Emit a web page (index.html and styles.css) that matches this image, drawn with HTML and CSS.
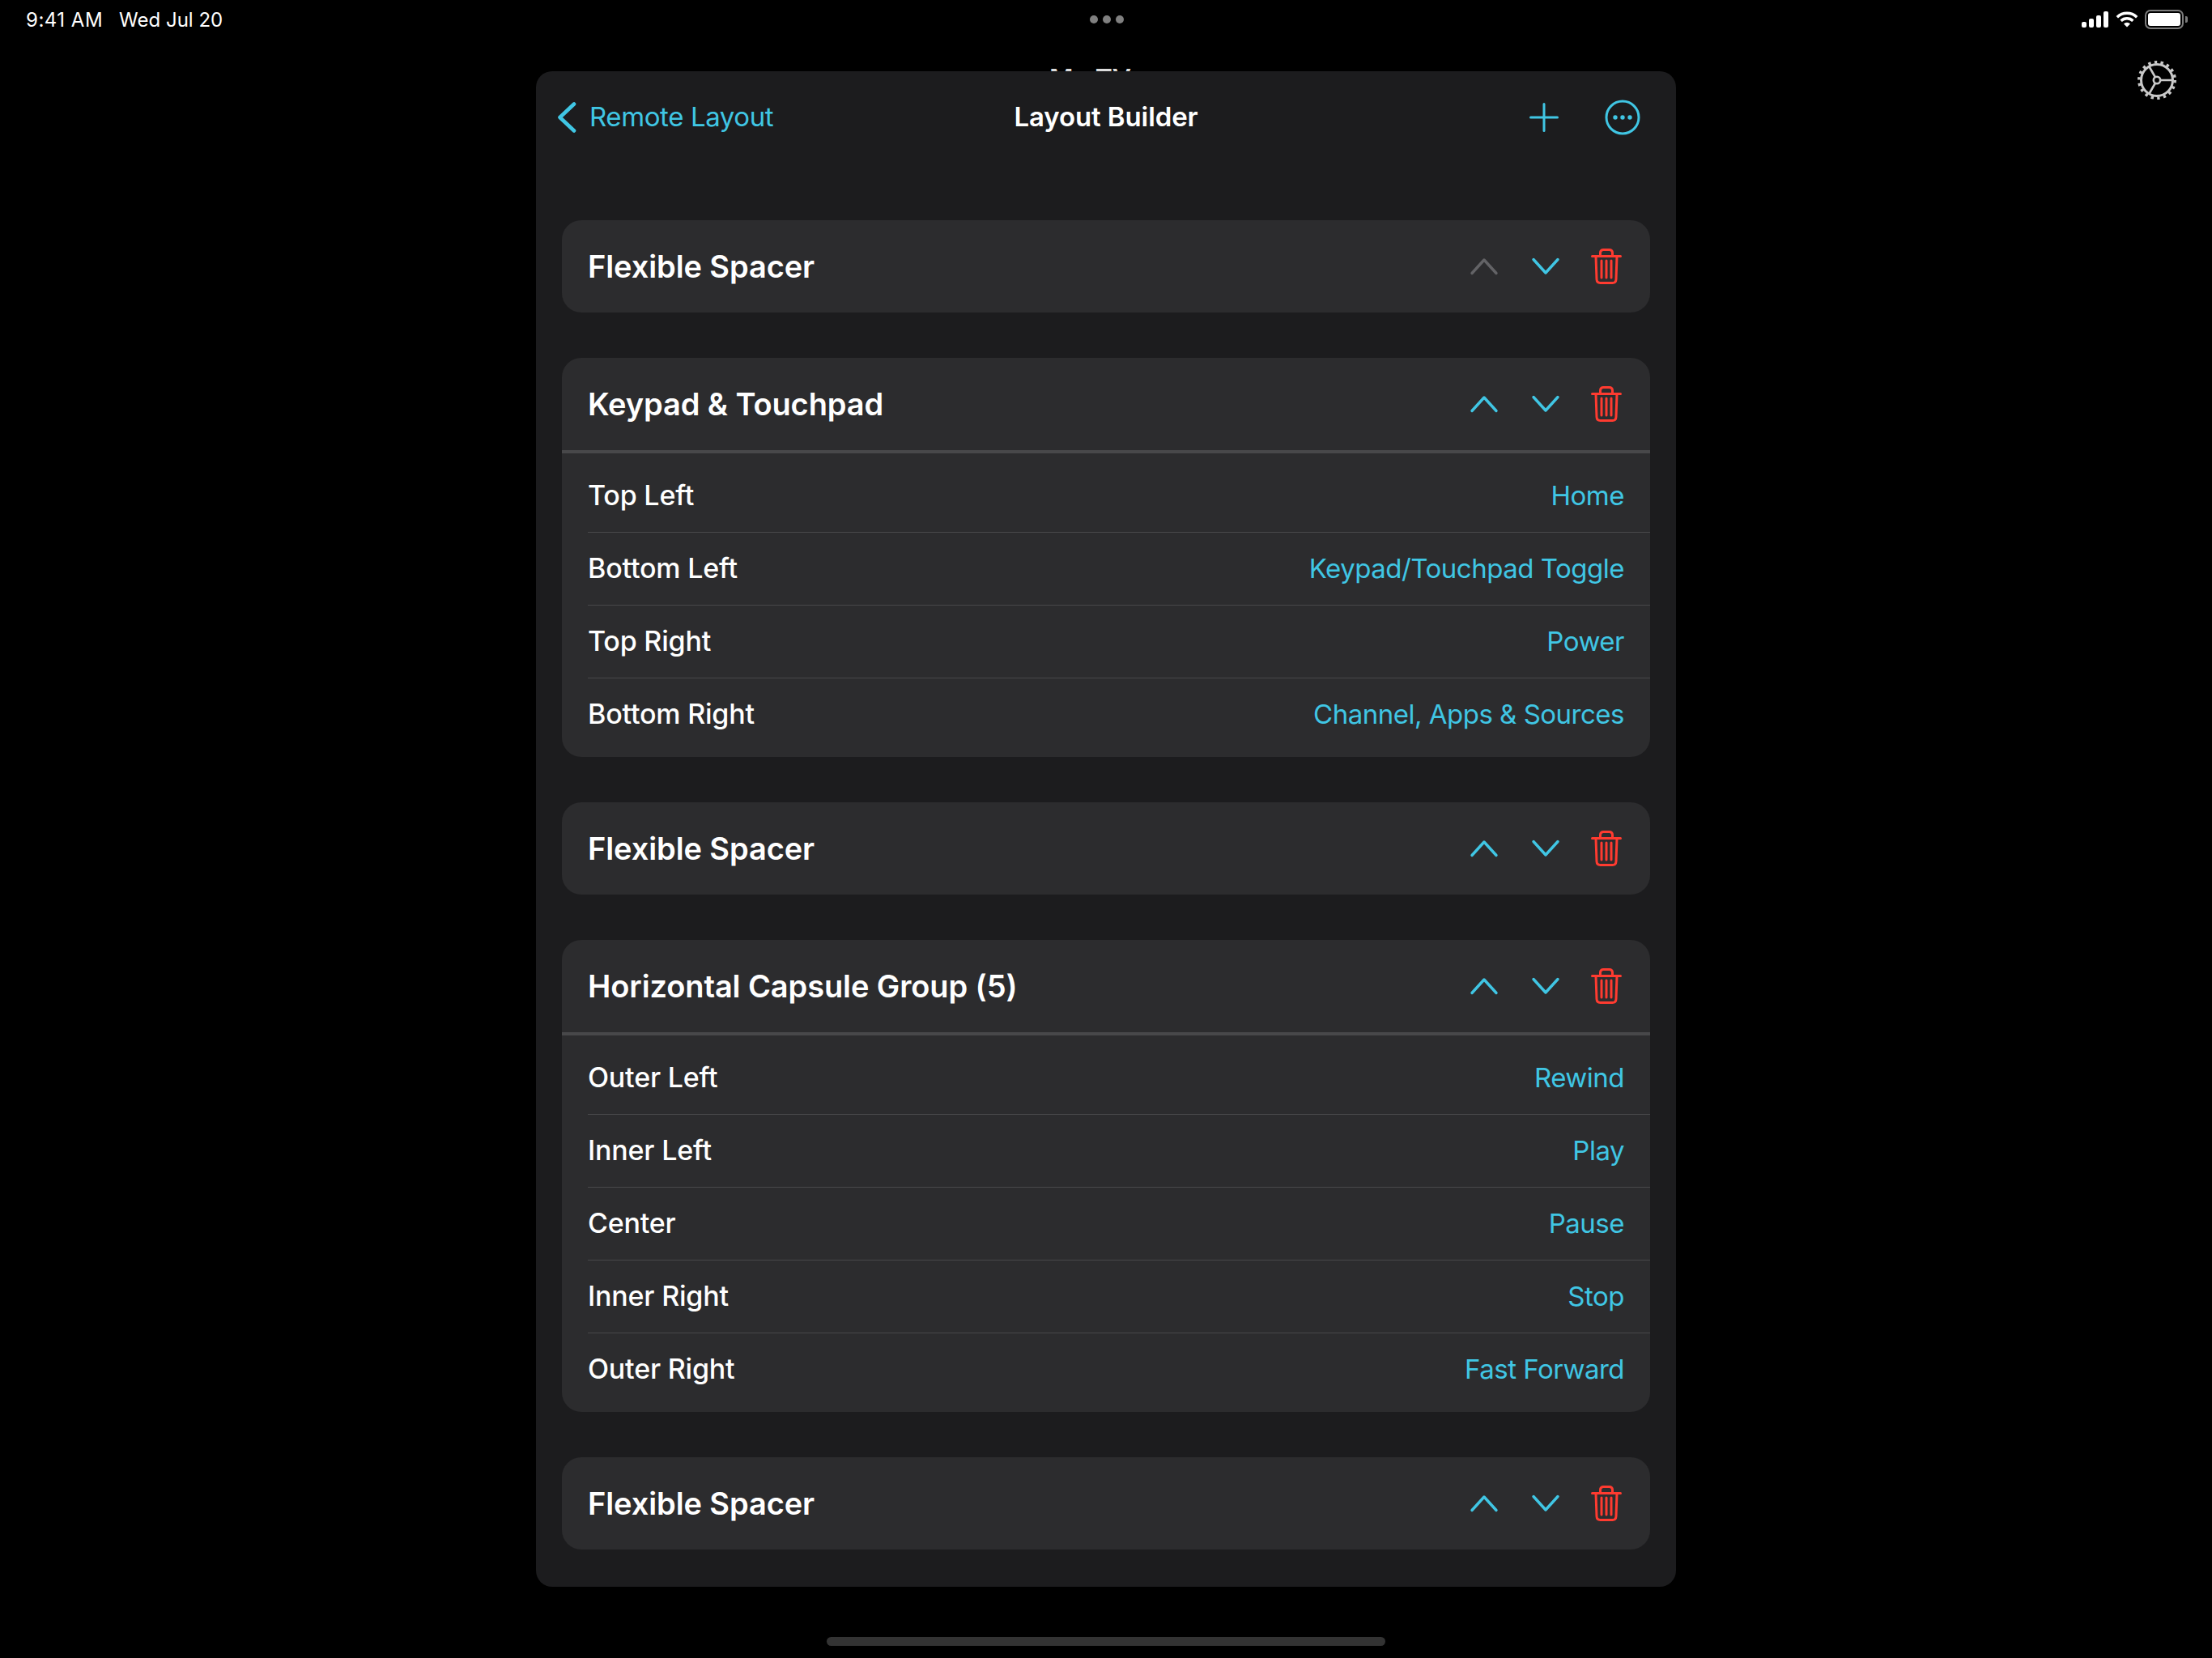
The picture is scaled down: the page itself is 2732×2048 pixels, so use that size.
FILE: index.html
```html
<!DOCTYPE html>
<html lang="en">
<head>
  <meta charset="UTF-8">
  <title>Layout Builder</title>
  <link rel="stylesheet" href="styles.css">
</head>
<body>
  <svg class="defs" width="0" height="0">
    <symbol id="chev-up" viewBox="0 0 36 22"><path d="M3 19.5 L18 3 L33 19.5" fill="none" stroke="currentColor" stroke-width="3.4" stroke-linecap="round" stroke-linejoin="round"/></symbol>
    <symbol id="chev-down" viewBox="0 0 36 22"><path d="M3 2.5 L18 19 L33 2.5" fill="none" stroke="currentColor" stroke-width="3.4" stroke-linecap="round" stroke-linejoin="round"/></symbol>
    <symbol id="trash" viewBox="0 0 38 44">
      <g fill="none" stroke="currentColor" stroke-width="3" stroke-linecap="round" stroke-linejoin="round">
        <path d="M1.5 9.5 H36.5"/>
        <path d="M11.5 9.5 V5.5 Q11.5 1.5 15.5 1.5 H22.5 Q26.5 1.5 26.5 5.5 V9.5"/>
        <path d="M6 9.5 L7 38 Q7.2 42.5 11.5 42.5 H26.5 Q30.8 42.5 31 38 L32 9.5"/>
        <path d="M13 15 V36 M19 15 V36 M25 15 V36"/>
      </g>
    </symbol>
  </svg>

  <header class="status-bar">
    <div class="status-left"><span class="status-time">9:41 AM</span><span>Wed Jul 20</span></div>
    <div class="status-dots"><i></i><i></i><i></i></div>
    <div class="status-right">
      <svg class="signal" width="34" height="20" viewBox="0 0 34 20" fill="#fff">
        <rect x="0" y="13" width="6" height="7" rx="2"/>
        <rect x="9" y="9" width="6" height="11" rx="2"/>
        <rect x="18" y="5" width="6" height="15" rx="2"/>
        <rect x="27" y="0" width="6" height="20" rx="2"/>
      </svg>
      <svg class="wifi" width="28" height="20" viewBox="0 0 28 20" fill="none" stroke="#fff" stroke-width="3.4">
        <path d="M1.8 7.2 A17.5 17.5 0 0 1 26.2 7.2"/>
        <path d="M6.6 11.8 A10.6 10.6 0 0 1 21.4 11.8"/>
        <path d="M10 15.4 L14 19.4 L18 15.4 A5.6 5.6 0 0 0 10 15.4 Z" fill="#fff" stroke="none"/>
      </svg>
      <div class="battery"><div class="battery-fill"></div></div>
      <div class="battery-cap"></div>
    </div>
  </header>

  <div class="behind-row">
    <div class="behind-title">My TV</div>
    <svg class="gear" width="48" height="48" viewBox="0 0 48 48" fill="none" stroke="#c9c9c9">
      <circle cx="24" cy="24" r="19.5" stroke-width="3"/>
      <circle cx="24" cy="24" r="22.2" stroke-width="3.6" stroke-dasharray="3.4 4.35"/>
      <circle cx="24" cy="24" r="4.2" stroke-width="2.6"/>
      <path d="M28 24 H44 M22 20.5 L14 6.5 M22 27.5 L14 41.5" stroke-width="2.6"/>
    </svg>
  </div>

  <main class="sheet">
    <nav class="nav">
      <a class="nav-back">
        <svg width="24" height="40" viewBox="0 0 24 40" fill="none" stroke="currentColor" stroke-width="4.6" stroke-linecap="round" stroke-linejoin="round"><path d="M21 3.5 L3.5 20 L21 36.5"/></svg>
        <span>Remote Layout</span>
      </a>
      <h1 class="nav-title">Layout Builder</h1>
      <div class="nav-actions">
        <svg width="36" height="36" viewBox="0 0 36 36" stroke="currentColor" stroke-width="3" stroke-linecap="round"><path d="M18 1.5 V34.5 M1.5 18 H34.5"/></svg>
        <svg width="44" height="44" viewBox="0 0 44 44" fill="none" stroke="currentColor" stroke-width="3"><circle cx="22" cy="22" r="20"/><g fill="currentColor" stroke="none"><circle cx="13" cy="22" r="2.7"/><circle cx="22" cy="22" r="2.7"/><circle cx="31" cy="22" r="2.7"/></g></svg>
      </div>
    </nav>

    <section class="card">
      <div class="card-head">
        <h2>Flexible Spacer</h2>
        <div class="card-tools">
          <svg class="tool tool-off"><use href="#chev-up"/></svg>
          <svg class="tool"><use href="#chev-down"/></svg>
          <svg class="trash"><use href="#trash"/></svg>
        </div>
      </div>
    </section>

    <section class="card">
      <div class="card-head">
        <h2>Keypad &amp; Touchpad</h2>
        <div class="card-tools">
          <svg class="tool"><use href="#chev-up"/></svg>
          <svg class="tool"><use href="#chev-down"/></svg>
          <svg class="trash"><use href="#trash"/></svg>
        </div>
      </div>
      <ul class="rows">
        <li><span>Top Left</span><a>Home</a></li>
        <li><span>Bottom Left</span><a>Keypad/Touchpad Toggle</a></li>
        <li><span>Top Right</span><a>Power</a></li>
        <li><span>Bottom Right</span><a>Channel, Apps &amp; Sources</a></li>
      </ul>
    </section>

    <section class="card">
      <div class="card-head">
        <h2>Flexible Spacer</h2>
        <div class="card-tools">
          <svg class="tool"><use href="#chev-up"/></svg>
          <svg class="tool"><use href="#chev-down"/></svg>
          <svg class="trash"><use href="#trash"/></svg>
        </div>
      </div>
    </section>

    <section class="card">
      <div class="card-head">
        <h2>Horizontal Capsule Group (5)</h2>
        <div class="card-tools">
          <svg class="tool"><use href="#chev-up"/></svg>
          <svg class="tool"><use href="#chev-down"/></svg>
          <svg class="trash"><use href="#trash"/></svg>
        </div>
      </div>
      <ul class="rows">
        <li><span>Outer Left</span><a>Rewind</a></li>
        <li><span>Inner Left</span><a>Play</a></li>
        <li><span>Center</span><a>Pause</a></li>
        <li><span>Inner Right</span><a>Stop</a></li>
        <li><span>Outer Right</span><a>Fast Forward</a></li>
      </ul>
    </section>

    <section class="card">
      <div class="card-head">
        <h2>Flexible Spacer</h2>
        <div class="card-tools">
          <svg class="tool"><use href="#chev-up"/></svg>
          <svg class="tool"><use href="#chev-down"/></svg>
          <svg class="trash"><use href="#trash"/></svg>
        </div>
      </div>
    </section>
  </main>

  <div class="home-bar"></div>
</body>
</html>
```

FILE: styles.css
```css
* {
  box-sizing: border-box;
}

html, body {
  height: 100%;
}

body {
  margin: 0;
  background: #000;
  color: #fff;
  font-family: Inter, "Noto Sans", sans-serif;
  overflow: hidden;
}

.defs {
  position: absolute;
}

.status-bar {
  height: 48px;
  padding: 0 30px 0 32px;
  display: grid;
  grid-template-columns: 1fr auto 1fr;
  align-items: center;
}

.status-left {
  display: flex;
  gap: 20px;
  font-size: 24px;
}

.status-time {
  letter-spacing: 0.5px;
}

.status-dots {
  display: flex;
  gap: 6px;
}

.status-dots i {
  width: 10px;
  height: 10px;
  border-radius: 50%;
  background: #808080;
}

.status-right {
  display: flex;
  justify-content: flex-end;
  align-items: center;
  gap: 8px;
}

.battery {
  width: 48px;
  height: 24px;
  border: 2px solid #7c7c7c;
  border-radius: 7px;
  padding: 2px;
}

.battery-fill {
  height: 100%;
  background: #fff;
  border-radius: 3px;
}

.battery-cap {
  width: 3px;
  height: 8px;
  margin-left: -6px;
  background: #7c7c7c;
  border-radius: 0 2px 2px 0;
}

.behind-row {
  height: 40px;
  position: relative;
}

.behind-title {
  position: absolute;
  left: 1296px;
  top: 30px;
  font-size: 32px;
  font-weight: 600;
  color: #ddd;
}

.gear {
  position: absolute;
  right: 44px;
  top: 27px;
}

.sheet {
  position: relative;
  width: 1408px;
  height: 1872px;
  margin: 0 auto;
  padding: 0 32px;
  background: #1c1c1e;
  border-radius: 20px;
}

.nav {
  height: 184px;
  margin: 0 -32px;
  padding: 0 44px 71px 26px;
  display: grid;
  grid-template-columns: 1fr 1fr;
  align-items: center;
  color: #40c6e4;
  position: relative;
}

.nav-back {
  display: flex;
  align-items: center;
  gap: 16px;
  font-size: 33px;
  letter-spacing: -0.4px;
}

.nav-back span {
  margin-top: -2px;
}

.nav-title {
  position: absolute;
  left: 0;
  right: 0;
  top: 0;
  height: 112px;
  line-height: 112px;
  margin: 0;
  text-align: center;
  font-size: 33px;
  font-weight: 600;
  letter-spacing: -0.1px;
  color: #fff;
}

.nav-actions {
  display: flex;
  justify-content: flex-end;
  align-items: center;
  gap: 57px;
}

.card {
  background: #2c2c2e;
  border-radius: 24px;
  margin-bottom: 56px;
  overflow: hidden;
}

.card-head {
  height: 114px;
  padding: 0 35px 0 32px;
  display: flex;
  justify-content: space-between;
  align-items: center;
}

.card-head h2 {
  margin: 0;
  font-size: 38px;
  font-weight: 600;
  letter-spacing: -0.1px;
}

.card-tools {
  display: flex;
  align-items: center;
  gap: 40px;
  color: #40c6e4;
}

.tool {
  width: 36px;
  height: 22px;
}

.tool-off {
  color: #636366;
}

.trash {
  width: 38px;
  height: 44px;
  margin-left: -2px;
  color: #ff3b30;
}

.rows {
  list-style: none;
  margin: 0;
  padding: 8px 0 7px 32px;
  border-top: 4px solid #48484a;
}

.rows li {
  height: 90px;
  line-height: 88px;
  padding-right: 32px;
  display: flex;
  justify-content: space-between;
  align-items: baseline;
  border-bottom: 1px solid #48484a;
  font-size: 34px;
  font-weight: 500;
  letter-spacing: -0.2px;
}

.rows li:last-child {
  border-bottom-color: transparent;
}

.rows a {
  color: #40c6e4;
  font-size: 33px;
  font-weight: 400;
  letter-spacing: -0.5px;
}

.home-bar {
  width: 690px;
  height: 11px;
  margin: 62px auto 0;
  background: #333;
  border-radius: 6px;
}
```
